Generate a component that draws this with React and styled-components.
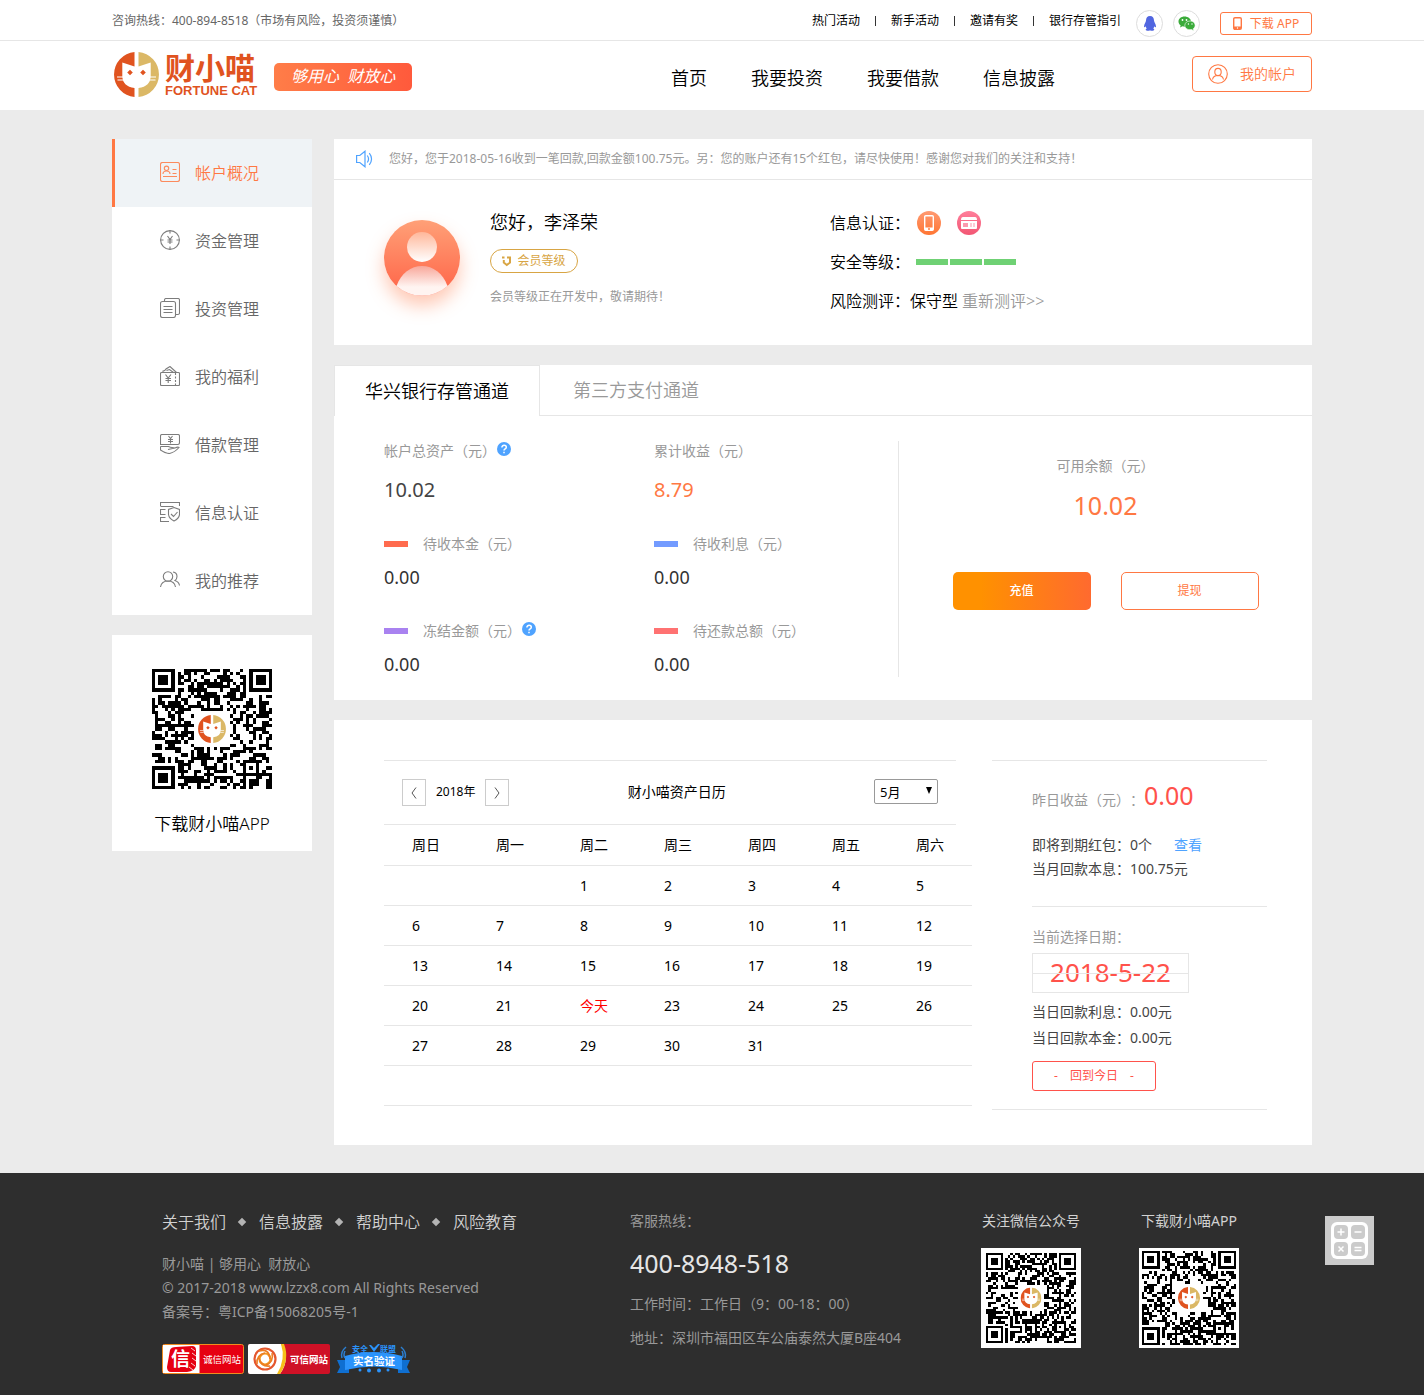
import React from "react";
import styled, { createGlobalStyle, css } from "styled-components";

const GlobalStyle = createGlobalStyle`
  *, *::before, *::after { box-sizing: border-box; }
  body {
    margin: 0;
    background: #ebebeb;
    color: #000;
    font: 400 14px/20px "Noto Sans", "Noto Sans CJK SC", sans-serif;
    text-spacing-trim: space-all;
  }
  a { color: inherit; text-decoration: none; }
  button, select { font: inherit; color: inherit; margin: 0; padding: 0; cursor: pointer; }
  ul { list-style: none; margin: 0; padding: 0; }
  p, h1, h2 { margin: 0; font-weight: inherit; }
  svg { display: block; flex: none; }
`;

const orange = "#ff7843";
const line = "#e6e6e6";

const Container = styled.div`
  width: 100%;
  max-width: 1200px;
  margin: 0 auto;
  display: flex;
`;

/* ---------- top bar ---------- */
const TopBar = styled.div`
  background: #fff;
  border-bottom: 1px solid ${line};
`;
const TopInner = styled(Container)`
  height: 40px;
  justify-content: space-between;
  font-size: 12px;
  line-height: 42px;
`;
const Hotline = styled.p`
  color: #666;
`;
const TopRight = styled.div`
  display: flex;
`;
const TopLinks = styled.ul`
  display: flex;
  align-items: flex-start;
  li { display: flex; align-items: center; }
  li + li::before {
    content: "";
    width: 1px;
    height: 10px;
    margin: 0 15px;
    background: #333;
  }
`;
const Social = styled.a`
  display: flex;
  align-items: center;
  justify-content: center;
  width: 27px;
  height: 27px;
  margin: 10px 0 0 ${(p) => p.$gap}px;
  border: 1px solid #ddd;
  border-radius: 50%;
`;
const DownloadButton = styled.button`
  display: flex;
  align-items: center;
  justify-content: center;
  gap: 8px;
  width: 92px;
  height: 23px;
  margin: 12px 0 0 20px;
  border: 1px solid ${orange};
  border-radius: 3px;
  background: #fff;
  color: ${orange};
  line-height: 22px;
`;

/* ---------- header ---------- */
const Header = styled.header`
  background: #fff;
`;
const HeaderInner = styled(Container)`
  height: 69px;
  align-items: center;
  padding-bottom: 3px;
`;
const Brand = styled.a`
  display: flex;
  align-items: center;
  gap: 6px;
  margin-left: 2px;
  color: #e0531f;
`;
const BrandText = styled.span`
  display: flex;
  flex-direction: column;
  font-weight: 700;
`;
const BrandName = styled.span`
  font-size: 30px;
  line-height: 34px;
`;
const BrandLatin = styled.span`
  font-family: "Liberation Sans", sans-serif;
  font-size: 13px;
  line-height: 12px;
`;
const Slogan = styled.p`
  width: 138px;
  height: 28px;
  margin: 6px 0 0 17px;
  border-radius: 5px;
  background: linear-gradient(90deg, #ff7d48, #ff5a3c);
  color: #fff;
  font-size: 16px;
  font-style: italic;
  line-height: 26px;
  text-align: center;
  white-space: pre;
`;
const MainNav = styled.nav`
  display: flex;
  gap: 44px;
  margin: 8px 137px 0 auto;
  font-size: 18px;
  font-weight: 350;
  line-height: 28px;
`;
const AccountButton = styled.button`
  display: flex;
  align-items: center;
  justify-content: center;
  gap: 12px;
  width: 120px;
  height: 36px;
  border: 1px solid ${orange};
  border-radius: 4px;
  background: #fff;
  color: ${orange};
  font-size: 14px;
  font-weight: 350;
`;

/* ---------- page ---------- */
const Page = styled(Container)`
  gap: 22px;
  align-items: flex-start;
  padding: 29px 0 28px;
`;
const Sidebar = styled.aside`
  display: flex;
  flex-direction: column;
  flex: none;
  gap: 20px;
  width: 200px;
`;
const Menu = styled.nav`
  background: #fff;
`;
const MenuItem = styled.a`
  display: flex;
  align-items: center;
  gap: 15px;
  height: 68px;
  padding: 0 0 2px 45px;
  border-left: 3px solid transparent;
  color: #666;
  font-size: 16px;
  font-weight: 350;
  span { padding-top: 1px; }
  svg { opacity: 0.85; }
  ${(p) =>
    p.$active &&
    css`
      border-color: ${orange};
      background: #eff3f6;
      color: ${orange};
    `}
`;
const QrCard = styled.div`
  display: flex;
  flex-direction: column;
  align-items: center;
  gap: 24px;
  padding: 34px 0 16px;
  background: #fff;
  font-size: 17px;
  font-weight: 350;
  line-height: 22px;
`;
const Main = styled.main`
  display: flex;
  flex: 1;
  flex-direction: column;
  gap: 20px;
  min-width: 0;
`;
const Card = styled.section`
  background: #fff;
`;

/* ---------- profile ---------- */
const Notice = styled.div`
  display: flex;
  align-items: center;
  gap: 16px;
  height: 41px;
  padding: 0 22px;
  border-bottom: 1px solid ${line};
  color: #999;
  font-size: 12px;
`;
const Profile = styled.div`
  display: flex;
  align-items: flex-start;
  padding: 27px 50px 28px;
`;
const Avatar = styled.div`
  width: 76px;
  height: 76px;
  margin: 13px 30px 0 0;
  border-radius: 50%;
  box-shadow: 0 10px 18px rgba(255, 120, 70, 0.4);
`;
const Greeting = styled.div`
  display: flex;
  flex-direction: column;
  align-items: flex-start;
  width: 340px;
  color: #999;
  font-size: 12px;
`;
const Hello = styled.h1`
  color: #000;
  font-size: 18px;
  font-weight: 350;
  line-height: 30px;
`;
const Level = styled.span`
  display: flex;
  align-items: center;
  justify-content: center;
  gap: 5px;
  width: 88px;
  height: 24px;
  margin: 12px 0 14px;
  border: 1px solid #d8a544;
  border-radius: 12px;
  color: #d8a544;
`;
const Facts = styled.div`
  display: flex;
  flex-direction: column;
  gap: 7px;
  font-size: 16px;
  font-weight: 350;
  line-height: 32px;
`;
const Fact = styled.div`
  display: flex;
  align-items: center;
  a { margin-left: 4px; color: #999; }
`;
const Badges = styled.span`
  display: flex;
  gap: 16px;
  margin-left: 7px;
`;
const Bars = styled.span`
  display: flex;
  gap: 2px;
  margin-left: 6px;
  i { width: 32px; height: 6px; background: #6fd174; }
`;

/* ---------- assets ---------- */
const Tabs = styled.div`
  display: flex;
  height: 51px;
  border-bottom: 1px solid ${line};
`;
const Tab = styled.button`
  height: 50px;
  padding: 0 33px;
  border: 0;
  background: #fff;
  color: #999;
  font-size: 18px;
  font-weight: 350;
  ${(p) =>
    p.$active &&
    css`
      height: 51px;
      padding: 0 30px;
      border: solid ${line};
      border-width: 1px 1px 0;
      color: #000;
    `}
`;
const Assets = styled.div`
  display: flex;
  padding: 25px 0 21px 50px;
`;
const Metrics = styled.div`
  display: grid;
  grid-template-columns: 270px 244px;
  row-gap: 29px;
`;
const Metric = styled.div`
  display: flex;
  flex-direction: column;
  gap: ${(p) => (p.$large ? 14 : 8)}px;
`;
const MetricLabel = styled.div`
  display: flex;
  gap: 1px;
  color: #999;
`;
const Swatch = styled.i`
  width: 24px;
  height: 6px;
  margin: 7px 14px 0 0;
  background: ${(p) => p.$color};
`;
const MetricValue = styled.div`
  color: ${(p) => p.$color || "#333"};
  font-size: ${(p) => (p.$large ? 20 : 18)}px;
  line-height: 30px;
`;
const Balance = styled.div`
  display: flex;
  flex: 1;
  flex-direction: column;
  align-items: center;
  height: 236px;
  padding-top: 15px;
  border-left: 1px solid ${line};
  color: #999;
  strong {
    margin: 9px 0 47px;
    color: ${orange};
    font-size: 25px;
    font-weight: 400;
    line-height: 40px;
  }
`;
const Actions = styled.div`
  display: flex;
  gap: 30px;
`;
const ActionButton = styled.button`
  width: 138px;
  height: 38px;
  border: 1px solid ${orange};
  border-radius: 5px;
  background: #fff;
  color: ${orange};
  font-size: 12px;
  ${(p) =>
    p.$primary &&
    css`
      border: 0;
      background: linear-gradient(90deg, #ff9100 20%, #ff6a2f);
      color: #fff;
      font-weight: 500;
    `}
`;

/* ---------- calendar ---------- */
const CalendarCard = styled(Card)`
  display: grid;
  grid-template-columns: 588fr 275fr;
  align-items: start;
  gap: 20px;
  padding: 40px 45px 35px 50px;
`;
const Calendar = styled.div`
  min-width: 0;
`;
const CalendarHead = styled.div`
  display: flex;
  justify-content: space-between;
  height: 65px;
  margin-right: 16px;
  padding: 18px;
  border: solid ${line};
  border-width: 1px 0;
`;
const YearPicker = styled.div`
  display: flex;
  gap: 10px;
  font-size: 12px;
  line-height: 25px;
`;
const ArrowButton = styled.button`
  display: flex;
  align-items: center;
  justify-content: center;
  width: 24px;
  height: 27px;
  border: 1px solid #ccc;
  background: #fff;
`;
const CalendarTitle = styled.h2`
  padding-right: 30px;
  font-size: 14px;
  line-height: 25px;
`;
const MonthPicker = styled.label`
  position: relative;
  height: 25px;
  svg { position: absolute; right: 6px; top: 8px; pointer-events: none; }
`;
const Select = styled.select`
  width: 64px;
  height: 25px;
  padding-left: 5px;
  border: 1px solid #999;
  border-radius: 2px;
  appearance: none;
  background: #fff;
  font-size: 13px;
`;
const Table = styled.table`
  width: 100%;
  table-layout: fixed;
  border-collapse: collapse;
  th, td {
    height: 40px;
    padding: 0 0 0 28px;
    border-bottom: 1px solid ${line};
    font-weight: inherit;
    text-align: left;
  }
  td { padding-top: 2px; }
`;
const Today = styled.span`
  color: #f00;
`;
const Summary = styled.div`
  padding-left: 40px;
  border: solid ${line};
  border-width: 1px 0;
  color: #444;
`;
const Yesterday = styled.p`
  display: flex;
  align-items: baseline;
  height: 55px;
  padding-top: 14px;
  color: #999;
  strong { color: #ff524b; font-size: 25px; font-weight: 400; line-height: 40px; }
`;
const Monthly = styled.div`
  padding: 17px 0 25px;
  border-bottom: 1px solid ${line};
  line-height: 24px;
  a { margin-left: 22px; color: #4fa3ff; }
`;
const PickedLabel = styled.p`
  margin: 20px 0 6px;
  color: #999;
`;
const PickedDate = styled.p`
  position: relative;
  width: 157px;
  height: 40px;
  border: 1px solid ${line};
  color: #ff524b;
  font-size: 26px;
  line-height: 36px;
  text-align: center;
  &::after {
    content: "";
    position: absolute;
    inset: 19px 0 auto;
    height: 1px;
    background: ${line};
  }
`;
const Daily = styled.div`
  padding: 6px 0 10px;
  line-height: 26px;
`;
const TodayButton = styled.button`
  display: flex;
  align-items: center;
  justify-content: center;
  gap: 12px;
  width: 124px;
  height: 30px;
  margin-bottom: 18px;
  border: 1px solid #ff524b;
  border-radius: 3px;
  background: #fff;
  color: #ff524b;
  font-size: 12px;
`;

/* ---------- footer ---------- */
const Footer = styled.footer`
  background: #2e2e2e;
  color: #999;
`;
const FooterInner = styled(Container)`
  padding: 36px 50px 21px;
`;
const About = styled.div`
  width: 468px;
  line-height: 24px;
`;
const FooterLinks = styled.ul`
  display: flex;
  margin-bottom: 17px;
  color: #d2d2d2;
  font-size: 16px;
  font-weight: 350;
  line-height: 26px;
  li { display: flex; align-items: center; }
  li + li::before {
    content: "";
    width: 6px;
    height: 6px;
    margin: 0 14px 0 13px;
    background: #b4b4b4;
    transform: rotate(45deg);
  }
`;
const Seals = styled.div`
  display: flex;
  gap: 4px;
  margin-top: 20px;
`;
const Contact = styled.div`
  display: flex;
  flex-direction: column;
  width: 351px;
  padding-top: 2px;
  strong {
    margin: 12px 0 11px;
    color: #e6e6e6;
    font-size: 25px;
    font-weight: 400;
    line-height: 40px;
  }
  p + p { margin-top: 14px; }
`;
const Codes = styled.div`
  display: flex;
  gap: 58px;
  padding-top: 2px;
  color: #d2d2d2;
`;
const Code = styled.div`
  display: flex;
  flex-direction: column;
  align-items: center;
  gap: 17px;
  width: 100px;
  white-space: nowrap;
`;
const CalculatorButton = styled.button`
  position: fixed;
  right: 50px;
  bottom: 130px;
  display: flex;
  align-items: center;
  justify-content: center;
  width: 49px;
  height: 49px;
  border: 0;
  background: #cbcbcb;
`;

/* ---------- drawings ---------- */
function CatMark({ size = 45, ...rest }) {
  return (
    <svg width={size} height={size} viewBox="0 0 45 45" {...rest}>
      <path d="M20.5 0A22.6 22.6 0 0 0 20.5 45V36Q8.5 34.5 8.3 24V10.5L20.5 14.5Z" fill="#e0531f" />
      <path d="M24.5 0A22.6 22.6 0 0 1 24.5 45V36Q36.5 34.5 36.7 24V10.5L24.5 14.5Z" fill="#dbb866" />
      <path d="M3 25H9M3.5 28H9M36 25H42M36 28H41.5" stroke="#fff" strokeWidth="1.1" />
      <path d="M16 17.7 18.8 20.5 16 23.3 13.2 20.5ZM29 17.7 31.8 20.5 29 23.3 26.2 20.5Z" fill="#e0531f" />
    </svg>
  );
}

const MODULES = 37;

function buildModules(seed) {
  let state = seed;
  const next = () => {
    state = (state + 0x6d2b79f5) | 0;
    let t = Math.imul(state ^ (state >>> 15), 1 | state);
    t = (t + Math.imul(t ^ (t >>> 7), 61 | t)) ^ t;
    return ((t ^ (t >>> 14)) >>> 0) / 4294967296;
  };
  const ring = (x, y, cx, cy, radius) => {
    const d = Math.max(Math.abs(x - cx), Math.abs(y - cy));
    if (d > radius + 1) return null;
    return d === radius || d <= radius - 2;
  };
  let path = "";
  for (let y = 0; y < MODULES; y += 1) {
    for (let x = 0; x < MODULES; x += 1) {
      let on = next() > 0.47;
      [[3, 3], [MODULES - 4, 3], [3, MODULES - 4]].forEach(([cx, cy]) => {
        const value = ring(x, y, cx, cy, 3);
        if (value !== null) on = value;
      });
      const d = Math.max(Math.abs(x - 30), Math.abs(y - 30));
      if (d <= 2) on = d !== 1;
      if (Math.max(Math.abs(x - 18), Math.abs(y - 18)) <= 5) on = false;
      if (on) path += `M${x} ${y}h1v1h-1z`;
    }
  }
  return path;
}

function QrCode({ size, quiet = 0, seed }) {
  const path = React.useMemo(() => buildModules(seed), [seed]);
  const span = MODULES + quiet * 2;
  return (
    <svg width={size} height={size} viewBox={`${-quiet} ${-quiet} ${span} ${span}`} role="img" aria-label="QR">
      <rect x={-quiet} y={-quiet} width={span} height={span} fill="#fff" />
      <path d={path} fill="#000" shapeRendering="crispEdges" />
      <CatMark x="14.2" y="14.2" size={8.6} />
    </svg>
  );
}

const Icon = ({ children, size = 20 }) => (
  <svg width={size} height={size} viewBox={`0 0 ${size} ${size}`} fill="none" stroke="currentColor" strokeWidth="1.1">
    {children}
  </svg>
);

const menu = [
  ["帐户概况", <>
    <rect x=".5" y=".5" width="19" height="19" rx="2" />
    <circle cx="6.5" cy="6.3" r="2.2" />
    <path d="M3 12c0-4 7-4 7 0M12.500 7.500h4M12.500 11.500h4M3 14.500h14" />
  </>],
  ["资金管理", <>
    <circle cx="10" cy="10" r="9.4" />
    <path d="M10 .5v3M10 16.500v3M.5 10h3M16.500 10h3M7.500 6l2.500 3.500L12.500 6M10 9.500V14M7.500 10h5M7.500 12h5" />
  </>],
  ["投资管理", <>
    <path d="M4.500 3.500V2q0-1.500 1.500-1.500h12q1.500 0 1.500 1.500v13q0 1.500-1.500 1.500h-2" />
    <rect x=".5" y="3.500" width="15" height="16" rx="2" />
    <path d="M3.500 8.500h9M3.500 11.500h9M3.500 14.500h9" />
  </>],
  ["我的福利", <>
    <rect x=".5" y="6.500" width="19" height="13" rx="1" />
    <path d="M3 6.500V5q2 0 3-2l4-2.500 6.500 6M6.500 4.500l3-1 4 3" />
    <path d="M5.500 8.500 8.200 12 11 8.500M8.200 12v5M5.500 12.500H11M5.500 14.500H11" />
    <path d="M15.500 7v12" strokeDasharray="2 1.500" />
  </>],
  ["借款管理", <>
    <path d="M.5 10.500V2Q.5.500 2 .5h16q1.500 0 1.500 1.500v6.500q0 2-1.500 2ZM8.500 2l2 2.500 2-2.500M10.500 4.500v5M8 5.500h5M8 7.500h5" />
    <path d="M.5 12.500h8q2 1 3.500 1l3 .5-7 1.500M.5 12.500V16q5 3.500 9 3.500 5-1 9.500-6-1-1-4 .5" />
  </>],
  ["信息认证", <>
    <path d="M.5 4V.5h19V4M.5 4.500h13M5.500 7.500h-5v5h5M5.500 15.500h-5v4H9M.5 15.500h5" />
    <path d="m14 5.500 5.500 2v5q-.5 4-5.500 6.500-5-2.500-5.500-6.500v-5ZM11 12l2.500 2.500 4-4.500" />
  </>],
  ["我的推荐", <>
    <circle cx="8" cy="6.500" r="4.700" />
    <path d="M.5 17q1-6 7.500-6t7.500 6M13 2q4 .5 4 4.500 0 2.500-2 4 4 1.500 4.500 5" />
  </>],
];

const metrics = [
  { label: "帐户总资产（元）", value: "10.02", large: true, color: "#444", help: true },
  { label: "累计收益（元）", value: "8.79", large: true, color: orange },
  { label: "待收本金（元）", value: "0.00", swatch: "#ff6b4e" },
  { label: "待收利息（元）", value: "0.00", swatch: "#739bff" },
  { label: "冻结金额（元）", value: "0.00", swatch: "#a982f0", help: true },
  { label: "待还款总额（元）", value: "0.00", swatch: "#ff7272" },
];

const weekdays = ["周日", "周一", "周二", "周三", "周四", "周五", "周六"];
const weeks = Array.from({ length: 6 }, (_, week) =>
  weekdays.map((_, day) => {
    const date = week * 7 + day - 1;
    return date > 0 && date <= 31 ? date : null;
  })
);

const HelpIcon = () => (
  <svg width="14" height="16" viewBox="0 0 14 16">
    <circle cx="7" cy="8" r="7" fill="#4fa3ff" />
    <path d="M4.900 6.500c0-3 4.400-2.700 4.400-.2C9.300 7.900 7 7.900 7 9.600M7 10.700v1.500" fill="none" stroke="#fff" strokeWidth="1.500" />
  </svg>
);

const PhoneIcon = () => (
  <svg width="9" height="13" viewBox="0 0 9 13">
    <rect x=".7" y=".7" width="7.600" height="11.600" rx="1.300" fill="none" stroke={orange} strokeWidth="1.400" />
    <path d="M1 9.500h7v2.500H1z" fill={orange} />
    <circle cx="4.500" cy="11" r=".7" fill="#fff" />
  </svg>
);

const QqIcon = () => (
  <svg width="14" height="15" viewBox="0 0 14 15">
    <path d="M7 0C4.300 0 3 2 3 4.500c0 1.500-2 3.500-2 6.300 0 1 1 .5 1.600-.6.200 1 .7 1.700 1.200 2.200C2 13 2.500 14.800 5 14.800c1 0 1.600-.3 2-.6.400.3 1 .6 2 .6 2.500 0 3-1.800 1.200-2.400.5-.5 1-1.200 1.200-2.200.6 1.100 1.600 1.600 1.600.6 0-2.800-2-4.800-2-6.300C11 2 9.700 0 7 0Z" fill="#5166e0" />
  </svg>
);

const WechatIcon = () => (
  <svg width="18" height="15" viewBox="0 0 18 15">
    <path d="M6.500.5C3 .5.500 2.700.500 5.600c0 1.600.9 3 2.200 3.900L2 11.500l2.500-1.200c4.500 1.300 8.500-1.300 8.500-4.700C13 2.700 10 .5 6.500.5Z" fill="#3bab3a" />
    <path d="M12 5C9 5 6.800 7 6.800 9.400c0 2.700 3 4.900 6.700 4.100l2.200 1.200-.5-1.900c3.700-2.700 1.800-7.800-3.200-7.800Z" fill="#3bab3a" stroke="#fff" strokeWidth=".6" />
    <g fill="#fff"><circle cx="4.500" cy="4" r=".9" /><circle cx="8.500" cy="4" r=".9" /><circle cx="10.400" cy="8" r=".7" /><circle cx="14" cy="8" r=".7" /></g>
  </svg>
);

const UserIcon = () => (
  <svg width="20" height="20" viewBox="0 0 20 20" fill="none" stroke="currentColor" strokeWidth="1.100">
    <circle cx="10" cy="10" r="9.300" />
    <ellipse cx="10" cy="8" rx="3.200" ry="3.600" />
    <path d="M4.500 15.500c.5-3 2.500-4 5.500-4s5 1 5.500 4" />
  </svg>
);

const SpeakerIcon = () => (
  <svg width="17" height="18" viewBox="0 0 17 18" fill="none" stroke="#4fa3ff" strokeWidth="1.200">
    <path d="M.6 5.500h3.200L9 1.200v15.600L3.800 12.500H.6ZM11.300 5.500q2.500 3.500 0 7M13.300 3.200q4.500 5.800 0 11.600" />
  </svg>
);

const AvatarArt = () => (
  <svg width="76" height="76" viewBox="0 0 76 76">
    <defs>
      <linearGradient id="face" x2="0" y2="1"><stop stopColor="#ffa077" /><stop offset="1" stopColor="#ff6347" /></linearGradient>
      <linearGradient id="head" x2="0" y2="1"><stop stopColor="#ffb79a" /><stop offset="1" stopColor="#fff" /></linearGradient>
      <linearGradient id="body" x2="0" y2="1"><stop stopColor="#f8a79a" /><stop offset=".7" stopColor="#fff4f1" /></linearGradient>
    </defs>
    <circle cx="38" cy="38" r="38" fill="url(#face)" />
    <circle cx="38" cy="27" r="15" fill="url(#head)" />
    <path d="M12.500 66C17 53 27 46 38 46s21 7 25.500 20A38 38 0 0 1 12.500 66Z" fill="url(#body)" />
  </svg>
);

const LevelIcon = () => (
  <svg width="10" height="11" viewBox="0 0 10 11" fill="none" stroke="#d8a544" strokeWidth="2">
    <path d="M0 1.500h2.500M5 1.500h4M1.800 4v2.500L4.800 9 8 6.500V1" />
  </svg>
);

const PhoneBadge = () => (
  <svg width="24" height="24" viewBox="0 0 24 24">
    <linearGradient id="phone" x2="0" y2="1"><stop stopColor="#ff9a72" /><stop offset="1" stopColor="#ff7633" /></linearGradient>
    <circle cx="12" cy="12" r="12" fill="url(#phone)" />
    <rect x="7.700" y="4.700" width="8.600" height="14.600" rx="1" fill="none" stroke="#fff" strokeWidth="1.400" />
    <path d="M8 16.500h8V19H8z" fill="#fff" /><circle cx="12" cy="18" r="1" fill="#ff7c40" />
  </svg>
);

const CardBadge = () => (
  <svg width="24" height="24" viewBox="0 0 24 24">
    <linearGradient id="bank" x2="0" y2="1"><stop stopColor="#ff7f9b" /><stop offset="1" stopColor="#f25673" /></linearGradient>
    <circle cx="12" cy="12" r="12" fill="url(#bank)" />
    <path d="M6 6h12q2 0 2 3H4q0-3 2-3ZM4 10h16v7q0 1-1 1H5q-1 0-1-1Z" fill="#fff" />
    <path d="M6 12h5v4H6ZM13.500 12h1v4h-1ZM16.500 12h1v4h-1Z" fill="#fb9aae" />
  </svg>
);

const Chevron = ({ right }) => (
  <svg width="6" height="12" viewBox="0 0 6 12" fill="none" stroke="#555">
    <path d={right ? "M1 .5 5 6 1 11.500" : "M5 .5 1 6 5 11.500"} />
  </svg>
);

const sealFont = '"Noto Sans CJK SC", sans-serif';

const IntegritySeal = () => (
  <svg width="82" height="30" viewBox="0 0 82 30">
    <rect x=".5" y=".5" width="81" height="29" rx="2" fill="#e60012" stroke="#f08c1e" />
    <path d="M1 1h36.500v28H1z" fill="#fff" />
    <path d="M8 6Q9 3 14 3L30 2q4 0 4 4v16q-1 5-9 6H9q-4 0-4-5Z" fill="#e60012" />
    <path d="M29 4l4 3M30 9l4 3M30 14l4 3M29 19l4 3M27 23l4 3" stroke="#fff" strokeWidth=".8" />
    <text x="9" y="22" fill="#fff" fontSize="19" fontWeight="700" fontFamily={sealFont}>信</text>
    <text x="41" y="19" fill="#fff" fontSize="9.500" fontFamily={sealFont}>诚信网站</text>
  </svg>
);

const TrustSeal = () => (
  <svg width="82" height="30" viewBox="0 0 82 30">
    <rect width="82" height="30" rx="2" fill="#cf1126" />
    <path d="M2 0h31q10 15-1 30H2q-2 0-2-2V2q0-2 2-2Z" fill="#fff" />
    <path d="M33 0h3q6 15-4 30h-3q9-15 4-30Z" fill="#f6c018" />
    <g fill="none" stroke="#e4572e" strokeWidth="2.200"><circle cx="17" cy="15" r="10.500" /><circle cx="17" cy="15" r="5.500" stroke="#f39a1f" /><path d="M11 7q10-3 11 8M24 9q2 9-6 12M22 22q-9 1-11-8M9 20q-1-9 8-11" stroke="#ed7d23" strokeWidth="1.600" /></g>
    <text x="42" y="19" fill="#fff" fontSize="9.500" fontWeight="700" fontFamily={sealFont}>可信网站</text>
  </svg>
);

const RealNameSeal = () => (
  <svg width="78" height="30" viewBox="-3 0 78 30">
    <path d="M0 16h12v13H0l3-6ZM73 16H61v13h12l-3-6Z" fill="#0f6fd1" />
    <path d="M8 12q28-8 57 0v14q-28-7-57 0Z" fill="#2b93fb" />
    <path d="M5 14q-2-6 4-11M8 14q-2-3 0-7M68 14q2-6-4-11M65 14q2-3 0-7" fill="none" stroke="#2b7ed0" strokeWidth="1.500" />
    <path d="m32 1 5 7 6-8-2 0-4 4-3-3Z" fill="#2b93fb" />
    <g fill="#2b93fb"><circle cx="23" cy="26" r="1.500" /><circle cx="32" cy="26.500" r="2" /><circle cx="42" cy="26.500" r="2" /><circle cx="51" cy="26" r="1.500" /></g>
    <text x="15" y="8" fill="#2b93fb" fontSize="8" fontWeight="700" fontFamily={sealFont}>安全</text>
    <text x="43" y="8" fill="#2b93fb" fontSize="8" fontWeight="700" fontFamily={sealFont}>联盟</text>
    <text x="16" y="21" fill="#fff" fontSize="10.500" fontWeight="700" fontFamily={sealFont}>实名验证</text>
  </svg>
);

const CalculatorIcon = () => (
  <svg width="37" height="37" viewBox="0 0 37 37">
    <rect width="37" height="37" rx="6" fill="#fff" />
    <g fill="#cbcbcb"><rect x="3" y="3" width="14" height="14" rx="4" /><rect x="20" y="3" width="14" height="14" rx="4" /><rect x="3" y="20" width="14" height="14" rx="4" /><rect x="20" y="20" width="14" height="14" rx="4" /></g>
    <path d="M6.500 10h7M10 6.500v7M23.500 10h7M7.500 24.500l5 5M12.500 24.500l-5 5M23.500 25.500h7M23.500 28.500h7" stroke="#fff" strokeWidth="1.500" />
  </svg>
);

export default function App() {
  const [month, setMonth] = React.useState(5);
  return (
    <>
      <GlobalStyle />
      <TopBar>
        <TopInner>
          <Hotline>咨询热线：400-894-8518（市场有风险，投资须谨慎）</Hotline>
          <TopRight>
            <TopLinks>
              {["热门活动", "新手活动", "邀请有奖", "银行存管指引"].map((text) => (
                <li key={text}><a href="#">{text}</a></li>
              ))}
            </TopLinks>
            <Social href="#" aria-label="QQ" $gap={15}><QqIcon /></Social>
            <Social href="#" aria-label="微信" $gap={10}><WechatIcon /></Social>
            <DownloadButton><PhoneIcon />下载 APP</DownloadButton>
          </TopRight>
        </TopInner>
      </TopBar>
      <Header>
        <HeaderInner>
          <Brand href="#">
            <CatMark />
            <BrandText>
              <BrandName>财小喵</BrandName>
              <BrandLatin>FORTUNE CAT</BrandLatin>
            </BrandText>
          </Brand>
          <Slogan>{"够用心  财放心"}</Slogan>
          <MainNav>
            {["首页", "我要投资", "我要借款", "信息披露"].map((text) => <a key={text} href="#">{text}</a>)}
          </MainNav>
          <AccountButton><UserIcon />我的帐户</AccountButton>
        </HeaderInner>
      </Header>

      <Page>
        <Sidebar>
          <Menu>
            {menu.map(([text, art], index) => (
              <MenuItem key={text} href="#" $active={index === 0}>
                <Icon>{art}</Icon>
                <span>{text}</span>
              </MenuItem>
            ))}
          </Menu>
          <QrCard>
            <QrCode size={120} seed={71} />
            <p>下载财小喵APP</p>
          </QrCard>
        </Sidebar>

        <Main>
          <Card>
            <Notice>
              <SpeakerIcon />
              <p>您好，您于2018-05-16收到一笔回款,回款金额100.75元。另：您的账户还有15个红包，请尽快使用！感谢您对我们的关注和支持！</p>
            </Notice>
            <Profile>
              <Avatar><AvatarArt /></Avatar>
              <Greeting>
                <Hello>您好，李泽荣</Hello>
                <Level><LevelIcon />会员等级</Level>
                <p>会员等级正在开发中，敬请期待！</p>
              </Greeting>
              <Facts>
                <Fact>信息认证：<Badges><PhoneBadge /><CardBadge /></Badges></Fact>
                <Fact>安全等级：<Bars><i /><i /><i /></Bars></Fact>
                <Fact>风险测评：保守型<a href="#">重新测评&gt;&gt;</a></Fact>
              </Facts>
            </Profile>
          </Card>

          <Card>
            <Tabs>
              <Tab $active>华兴银行存管通道</Tab>
              <Tab>第三方支付通道</Tab>
            </Tabs>
            <Assets>
              <Metrics>
                {metrics.map((m) => (
                  <Metric key={m.label} $large={m.large}>
                    <MetricLabel>
                      {m.swatch && <Swatch $color={m.swatch} />}
                      {m.label}
                      {m.help && <HelpIcon />}
                    </MetricLabel>
                    <MetricValue $large={m.large} $color={m.color}>{m.value}</MetricValue>
                  </Metric>
                ))}
              </Metrics>
              <Balance>
                可用余额（元）
                <strong>10.02</strong>
                <Actions>
                  <ActionButton $primary>充值</ActionButton>
                  <ActionButton>提现</ActionButton>
                </Actions>
              </Balance>
            </Assets>
          </Card>

          <CalendarCard>
            <Calendar>
              <CalendarHead>
                <YearPicker>
                  <ArrowButton aria-label="上一年"><Chevron /></ArrowButton>
                  2018年
                  <ArrowButton aria-label="下一年"><Chevron right /></ArrowButton>
                </YearPicker>
                <CalendarTitle>财小喵资产日历</CalendarTitle>
                <MonthPicker>
                  <Select aria-label="月份" value={month} onChange={(e) => setMonth(Number(e.target.value))}>
                    {Array.from({ length: 12 }, (_, i) => <option key={i} value={i + 1}>{i + 1}月</option>)}
                  </Select>
                  <svg width="6" height="7" viewBox="0 0 6 7"><path d="M0 0h6L3 7Z" /></svg>
                </MonthPicker>
              </CalendarHead>
              <Table>
                <thead>
                  <tr>{weekdays.map((day) => <th key={day} scope="col">{day}</th>)}</tr>
                </thead>
                <tbody>
                  {weeks.map((week, index) => (
                    <tr key={index}>
                      {week.map((date, day) => <td key={day}>{date === 22 ? <Today>今天</Today> : date}</td>)}
                    </tr>
                  ))}
                </tbody>
              </Table>
            </Calendar>
            <Summary>
              <Yesterday>昨日收益（元）：<strong>0.00</strong></Yesterday>
              <Monthly>
                <p>即将到期红包：0个<a href="#">查看</a></p>
                <p>当月回款本息：100.75元</p>
              </Monthly>
              <PickedLabel>当前选择日期：</PickedLabel>
              <PickedDate>2018-5-22</PickedDate>
              <Daily>
                <p>当日回款利息：0.00元</p>
                <p>当日回款本金：0.00元</p>
              </Daily>
              <TodayButton><span>-</span>回到今日<span>-</span></TodayButton>
            </Summary>
          </CalendarCard>
        </Main>
      </Page>

      <Footer>
        <FooterInner>
          <About>
            <FooterLinks>
              {["关于我们", "信息披露", "帮助中心", "风险教育"].map((text) => (
                <li key={text}><a href="#">{text}</a></li>
              ))}
            </FooterLinks>
            <p>财小喵 | 够用心&nbsp; 财放心</p>
            <p>© 2017-2018 www.lzzx8.com All Rights Reserved</p>
            <p>备案号：粤ICP备15068205号-1</p>
            <Seals><IntegritySeal /><TrustSeal /><RealNameSeal /></Seals>
          </About>
          <Contact>
            <p>客服热线：</p>
            <strong>400-8948-518</strong>
            <p>工作时间：工作日（9：00-18：00）</p>
            <p>地址：深圳市福田区车公庙泰然大厦B座404</p>
          </Contact>
          <Codes>
            <Code>关注微信公众号<QrCode size={100} quiet={2} seed={1234} /></Code>
            <Code>下载财小喵APP<QrCode size={100} quiet={1} seed={977} /></Code>
          </Codes>
        </FooterInner>
      </Footer>
      <CalculatorButton aria-label="计算器"><CalculatorIcon /></CalculatorButton>
    </>
  );
}
